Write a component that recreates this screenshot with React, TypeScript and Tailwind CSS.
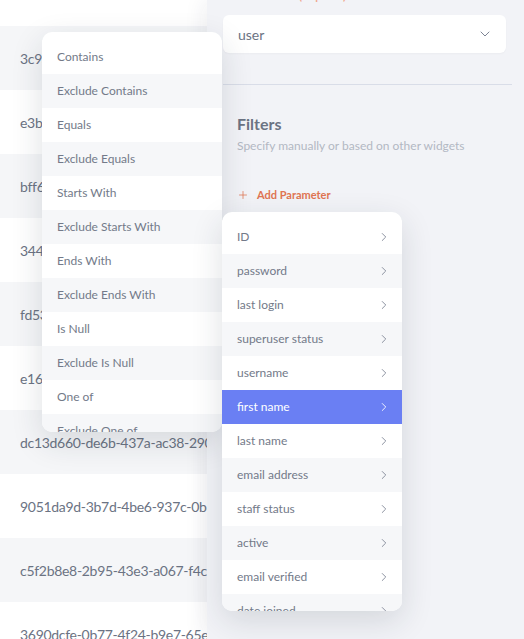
import { ChevronDown, ChevronRight, Plus } from "lucide-react";

const ids = [
  "3c9a7e21-5b4d-4f0e-9a1c-2d8e7f6b5a40",
  "e3b0c442-98fc-4c14-9afb-f4c8996fb924",
  "bff6a2d1-7c3e-4a9b-8e5f-1d2c3b4a5e6f",
  "344f8b2c-1d9e-4e7a-b6c5-9f0a1b2c3d4e",
  "fd53a1b7-6e2c-48d9-a0f4-3b5c7d9e1f20",
  "e16c9d4a-2b7f-4c3e-91a8-5d6e7f8a9b0c",
  "dc13d660-de6b-437a-ac38-290f1e2d3c4b",
  "9051da9d-3b7d-4be6-937c-0b3a4c5d6e7f",
  "c5f2b8e8-2b95-43e3-a067-f4cb1a2b3c4d",
  "3690dcfe-0b77-4f24-b9e7-65e3a1b2c3d4",
];

const operators = [
  "Contains",
  "Exclude Contains",
  "Equals",
  "Exclude Equals",
  "Starts With",
  "Exclude Starts With",
  "Ends With",
  "Exclude Ends With",
  "Is Null",
  "Exclude Is Null",
  "One of",
  "Exclude One of",
];

const fields = [
  "ID",
  "password",
  "last login",
  "superuser status",
  "username",
  "first name",
  "last name",
  "email address",
  "staff status",
  "active",
  "email verified",
  "date joined",
];

export default function App() {
  return (
    <div
      className="relative w-[524px] h-[639px] overflow-hidden flex bg-white"
      style={{ fontFamily: "Lato, 'Noto Sans', sans-serif" }}
    >
      {/* Left: table rows */}
      <div className="w-[207px] shrink-0 overflow-hidden">
        <div className="h-[26px] bg-white" />
        {ids.map((id, i) => (
          <div
            key={id}
            className={`h-[64px] flex items-center pl-5 whitespace-nowrap text-[14px] tracking-[-0.3px] text-[#6b7383] ${
              i % 2 === 0 ? "bg-[#f5f6f8]" : "bg-white"
            }`}
          >
            {id}
          </div>
        ))}
      </div>

      {/* Right: settings panel */}
      <div className="flex-1 bg-[#f2f3f7] shadow-[-6px_0_18px_rgba(30,40,60,0.06)] pl-4 pr-3">
        <div className="h-[15px] relative">
          <span className="absolute left-[76px] -top-[12px] text-[11px] font-bold text-[#f0a78f]">
            (required)
          </span>
        </div>
        <div className="h-[38px] mr-[6px] bg-white rounded-md flex items-center justify-between pl-[15px] pr-[13px] shadow-[0_1px_2px_rgba(0,0,0,0.03)]">
          <span className="text-[14px] text-[#6b7383]">user</span>
          <ChevronDown className="w-4 h-4 text-[#7d8494]" strokeWidth={1.5} />
        </div>
        <div className="mt-[31px] h-px bg-[#d9dde8]" />
        <div className="pl-[14px] pt-[29px]">
          <h3 className="text-[16px] font-bold text-[#6b7383] leading-5">Filters</h3>
          <p className="mt-[4px] text-[12px] text-[#b3b8c3] leading-4">
            Specify manually or based on other widgets
          </p>
          <div className="mt-[33px] flex items-center gap-[8px] text-[#e07552]">
            <Plus className="w-[12px] h-[12px]" strokeWidth={1.5} />
            <span className="text-[11px] font-bold">Add Parameter</span>
          </div>
        </div>
      </div>

      {/* Operator dropdown */}
      <div className="absolute left-[42px] top-[32px] w-[180px] h-[400px] bg-white rounded-[10px] overflow-hidden shadow-[0_10px_32px_rgba(30,40,60,0.14)] pt-2">
        {operators.map((op, i) => (
          <div
            key={op}
            className={`h-[34px] flex items-center pl-[15px] text-[12px] text-[#737a89] whitespace-nowrap ${
              i % 2 === 1 ? "bg-[#f6f7f9]" : "bg-white"
            }`}
          >
            {op}
          </div>
        ))}
      </div>

      {/* Field dropdown */}
      <div className="absolute left-[222px] top-[212px] w-[180px] h-[399px] bg-white rounded-[10px] overflow-hidden shadow-[0_10px_32px_rgba(30,40,60,0.14)] pt-2">
        {fields.map((f, i) => {
          const active = f === "first name";
          return (
            <div
              key={f}
              className={`h-[34px] flex items-center justify-between pl-[15px] pr-[11px] text-[12px] whitespace-nowrap ${
                active
                  ? "bg-[#6a7ff3] text-white"
                  : i % 2 === 1
                  ? "bg-[#f6f7f9] text-[#737a89]"
                  : "bg-white text-[#737a89]"
              }`}
            >
              <span>{f}</span>
              <ChevronRight
                className={`w-[14px] h-[14px] ${active ? "text-white" : "text-[#7d8494]"}`}
                strokeWidth={1.5}
              />
            </div>
          );
        })}
      </div>
    </div>
  );
}
